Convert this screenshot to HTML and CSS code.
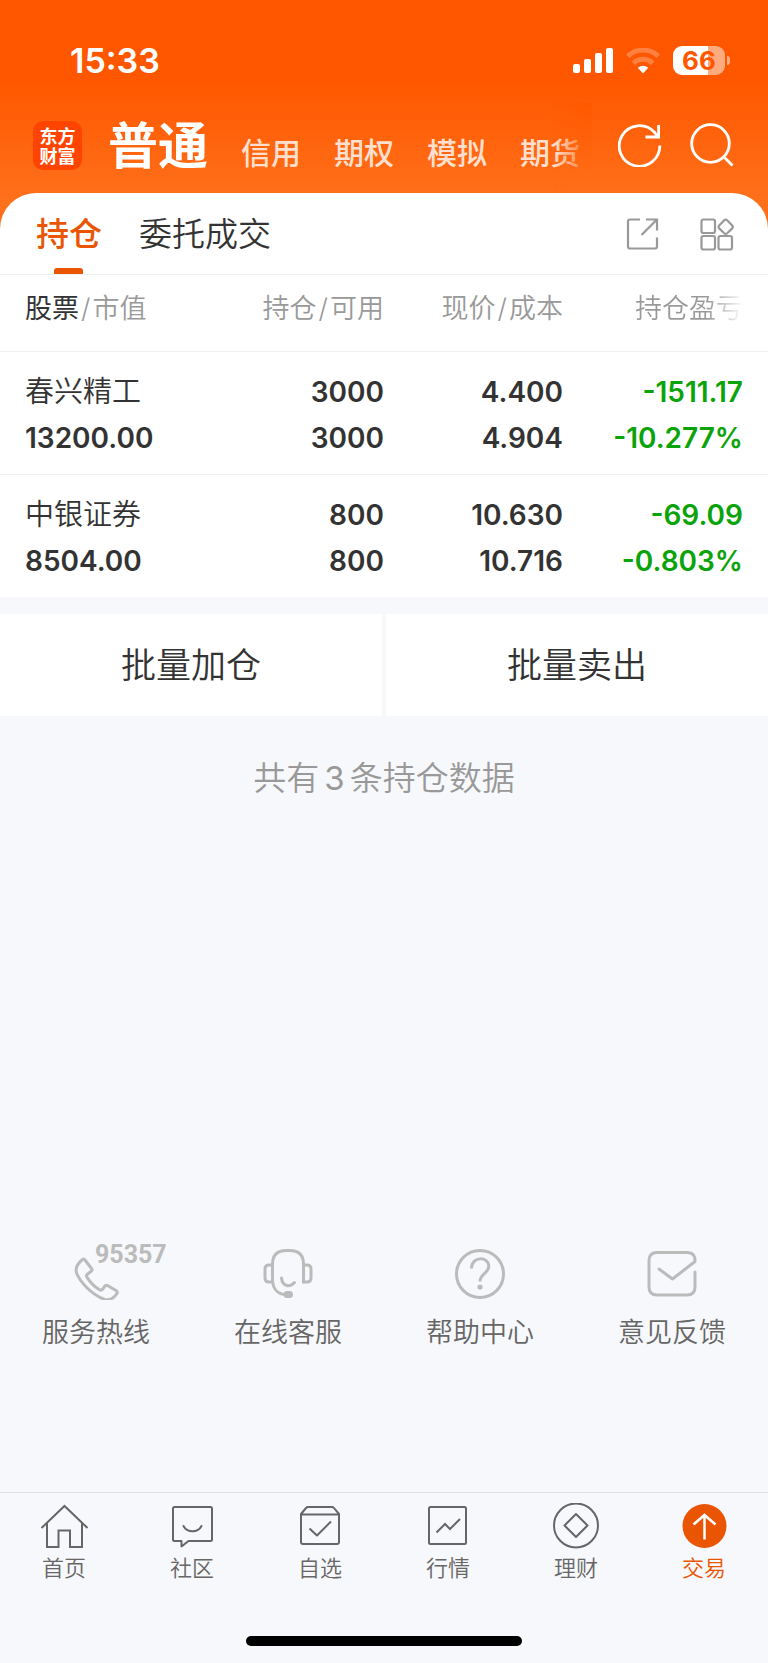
FILE: index.html
```html
<!DOCTYPE html>
<html lang="zh-CN">
<head>
<meta charset="utf-8">
<meta name="viewport" content="width=device-width, initial-scale=1">
<title>普通交易 - 持仓</title>
<link rel="stylesheet" href="styles.css">
</head>
<body>
<div class="app">
  <header class="top">
    <div class="status">
      <span class="clock">15:33</span>
      <div class="status-icons">
        <svg class="signal" width="40" height="26" viewBox="0 0 40 26" fill="#fff" aria-hidden="true">
          <rect x="0" y="16" width="7" height="9" rx="2"/><rect x="11" y="11" width="7" height="14" rx="2"/><rect x="22" y="5" width="7" height="20" rx="2"/><rect x="33" y="0" width="7" height="25" rx="2"/>
        </svg>
        <svg class="wifi" width="34" height="26" viewBox="0 0 34 26" fill="none" aria-hidden="true">
          <path d="M1.800 8.200A22 22 0 0 1 32.200 8.200" stroke="#fff" stroke-opacity=".25" stroke-width="5"/>
          <path d="M7.300 15.200A14 14 0 0 1 26.700 15.200" stroke="#fff" stroke-opacity=".25" stroke-width="5"/>
          <path d="M17 25.500L11.800 19.800Q17 15.800 22.200 19.800Z" fill="#fff"/>
        </svg>
        <div class="battery"><span class="battery-body">66</span><span class="battery-nub"></span></div>
      </div>
    </div>
    <div class="account">
      <div class="logo">东方<br>财富</div>
      <nav class="accounts">
        <a class="current" href="#">普通</a><a href="#">信用</a><a href="#">期权</a><a href="#">模拟</a><a href="#">期货</a>
      </nav>
      <button class="tool" aria-label="刷新">
        <svg width="44" height="44" viewBox="0 0 44 44" fill="none" stroke="#fff" stroke-width="2.800" aria-hidden="true">
          <path d="M41.800 22.500A20.300 20.300 0 1 1 36.500 9.300L40 13.800"/><path d="M40.600 2V14H27.500"/>
        </svg>
      </button>
      <button class="tool" aria-label="搜索">
        <svg width="44" height="44" viewBox="0 0 44 44" fill="none" stroke="#fff" stroke-width="2.800" aria-hidden="true">
          <circle cx="20.500" cy="20.500" r="18.800"/><path d="M33.500 33.500L42.500 42.500"/>
        </svg>
      </button>
    </div>
  </header>

  <main class="sheet">
    <div class="tabs">
      <button class="tab active">持仓</button>
      <button class="tab">委托成交</button>
      <button class="tool push" aria-label="分享">
        <svg width="34" height="34" viewBox="0 0 34 34" fill="none" stroke="#999" stroke-width="2.200" aria-hidden="true">
          <path d="M14 2.500H4Q2 2.500 2 4.500V29.500Q2 31.500 4 31.500H29Q31 31.500 31 29.500V20.500"/><path d="M20 2.500H31V13.500M31 2.500L15.500 18"/>
        </svg>
      </button>
      <button class="tool" aria-label="更多功能">
        <svg width="34" height="34" viewBox="0 0 34 34" fill="none" stroke="#999" stroke-width="2.200" aria-hidden="true">
          <rect x="1.500" y="2.500" width="13.500" height="13.500" rx="2"/><rect x="1.500" y="19" width="13.500" height="13.500" rx="2"/><rect x="18.500" y="19" width="13.500" height="13.500" rx="2"/>
          <path d="M24.200 3.300Q25.700 1.900 27.200 3.300L32.200 8.400Q33.400 9.900 32.200 11.400L27.200 16.300Q25.700 17.700 24.200 16.300L19.200 11.400Q18 9.900 19.200 8.400Z"/>
        </svg>
      </button>
    </div>

    <table class="holdings">
      <thead>
        <tr><th scope="col"><b>股票</b><i>/</i>市值</th><th scope="col">持仓<i>/</i>可用</th><th scope="col">现价<i>/</i>成本</th><th scope="col" class="clipped">持仓盈亏</th></tr>
      </thead>
      <tbody>
        <tr><td><span class="name">春兴精工</span>13200.00</td><td>3000<br>3000</td><td>4.400<br>4.904</td><td class="loss">-1511.17<br>-10.277%</td></tr>
        <tr><td><span class="name">中银证券</span>8504.00</td><td>800<br>800</td><td>10.630<br>10.716</td><td class="loss">-69.09<br>-0.803%</td></tr>
      </tbody>
    </table>

    <div class="batch">
      <button>批量加仓</button>
      <button>批量卖出</button>
    </div>
    <p class="count">共有<span>3</span>条持仓数据</p>
  </main>

  <section class="services">
    <a href="#" class="hotline">
      <span class="service-icon">
        <svg width="52" height="52" viewBox="0 0 52 52" fill="none" stroke="#bbb" stroke-width="3" stroke-linejoin="round" aria-hidden="true">
          <path d="M15 12L21.800 21Q22.500 22 21.500 23L17 26.500Q16 27.500 16.700 28.700Q22 37.500 30 42Q31.500 42.500 32.500 41.300L35 38Q36 36.700 37.500 37.500L46 42.500Q48 44 47 45.500Q42 53 34.500 51.500C21 46 10.500 34.500 6.500 25Q4.500 18 12.500 11.500Q14 10.500 15 12Z"/>
        </svg>
        <span class="number">95357</span>
      </span>
      服务热线
    </a>
    <a href="#">
      <span class="service-icon">
        <svg width="52" height="52" viewBox="0 0 52 52" fill="none" stroke="#bbb" stroke-width="3" stroke-linecap="round" stroke-linejoin="round" aria-hidden="true">
          <path d="M41.500 34V16Q41.500 2.500 27.500 2.500H24.500Q10.500 2.500 10.500 16V31C10.500 40 15 46 23 46.500"/>
          <path d="M10.500 17H7Q3 17 3 21V30Q3 34 7 34H10.500M41.500 17H45Q49 17 49 21V30Q49 34 45 34H41.500"/>
          <path d="M19.500 30C20.500 39.500 28.500 39 32.500 34.500"/><rect x="23" y="44.500" width="6.500" height="4" rx="2" fill="#bbb"/>
        </svg>
      </span>
      在线客服
    </a>
    <a href="#">
      <span class="service-icon">
        <svg width="52" height="52" viewBox="0 0 52 52" fill="none" stroke="#bbb" stroke-width="3" aria-hidden="true">
          <circle cx="26" cy="26" r="23.500"/><path d="M17.500 20.500C17.500 8 34.800 8 34.800 18.500C34.800 25 26 26 26 33.500"/><circle cx="26" cy="39" r="2.600" fill="#bbb" stroke="none"/>
        </svg>
      </span>
      帮助中心
    </a>
    <a href="#">
      <span class="service-icon">
        <svg width="52" height="52" viewBox="0 0 52 52" fill="none" stroke="#bbb" stroke-width="3" stroke-linecap="round" stroke-linejoin="round" aria-hidden="true">
          <path d="M49 24V39Q49 47 41 47H11Q3 47 3 39V12.500Q3 4.500 11 4.500H41Q49.500 4.500 49 13.500L26.500 31L13 21"/>
        </svg>
      </span>
      意见反馈
    </a>
  </section>

  <footer class="bottom">
    <nav class="dock">
      <a href="#">
        <svg width="48" height="48" viewBox="0 0 48 48" fill="none" stroke="#666" stroke-width="2" aria-hidden="true"><path d="M1.500 25L24.500 3L47.500 25M7 20V44H18.500V27.500H30V44H42V20"/></svg>
        首页
      </a>
      <a href="#">
        <svg width="48" height="48" viewBox="0 0 48 48" fill="none" stroke="#666" stroke-width="2" stroke-linejoin="round" aria-hidden="true"><path d="M6.500 4H42.500Q44 4 44 5.500V36.500Q44 38 42.500 38H20.500L13.500 43.500V38H6.500Q5 38 5 36.500V5.500Q5 4 6.500 4Z"/><path d="M15.500 23C19 30 30 30 33.500 23" stroke-linecap="round"/></svg>
        社区
      </a>
      <a href="#">
        <svg width="48" height="48" viewBox="0 0 48 48" fill="none" stroke="#666" stroke-width="2" stroke-linejoin="round" aria-hidden="true"><path d="M5 11L10 5Q10.800 4 12 4H36Q37.200 4 38 5L43 11V39Q43 41 41 41H7Q5 41 5 39ZM5 11.500H43"/><path d="M13.500 25.500L21 32.500L35 18.500"/></svg>
        自选
      </a>
      <a href="#">
        <svg width="48" height="48" viewBox="0 0 48 48" fill="none" stroke="#666" stroke-width="2" aria-hidden="true"><rect x="5" y="4" width="37" height="37" rx="1.500"/><path d="M12.500 29.500L21 21L26 26L36 16"/></svg>
        行情
      </a>
      <a href="#">
        <svg width="48" height="48" viewBox="0 0 48 48" fill="none" stroke="#666" stroke-width="2" stroke-linejoin="round" aria-hidden="true"><circle cx="24" cy="22.500" r="22"/><path d="M24 11L35.500 22.500L24 34L12.500 22.500Z"/></svg>
        理财
      </a>
      <a href="#" class="active">
        <svg width="48" height="48" viewBox="0 0 48 48" fill="none" stroke="#fff" stroke-width="2.500" aria-hidden="true"><circle cx="24.500" cy="23" r="22" fill="#ea5504" stroke="none"/><path d="M24.500 36.500V12M13.500 21.500L24.500 12L35.500 21.500"/></svg>
        交易
      </a>
    </nav>
    <div class="home-bar"></div>
  </footer>
</div>
</body>
</html>
```
FILE: styles.css
```css
* { box-sizing: border-box; }

body {
  margin: 0;
  background: #f7f8fa;
  color: #333;
  font-family: Inter, "Noto Sans CJK SC", sans-serif;
}

a { color: inherit; text-decoration: none; }

button {
  padding: 0;
  border: 0;
  background: none;
  color: inherit;
  font: inherit;
}

svg { display: block; }

.app {
  display: flex;
  flex-direction: column;
  min-height: 100vh;
  background: linear-gradient(#ff5700 80px, #ff701a 200px, #ff701a 240px, #f7f8fb 240px);
}

.top { color: #fff; }

.status {
  display: flex;
  align-items: center;
  justify-content: space-between;
  height: 103px;
  padding: 18px 38px 0 70px;
}

.clock { font-size: 34px; font-weight: 600; line-height: 40px; }

.status-icons { display: flex; align-items: center; gap: 13px; }

.battery { display: flex; align-items: center; gap: 2px; }

.battery-body {
  width: 52px;
  border-radius: 9px;
  background: linear-gradient(90deg, #fff 67%, #ffab80 67%);
  color: #ff5700;
  font-size: 26px;
  font-weight: 700;
  line-height: 29px;
  text-align: center;
}

.battery-nub { width: 3px; height: 9px; border-radius: 0 4px 4px 0; background: #ffab80; }

.account {
  display: flex;
  align-items: center;
  height: 90px;
  padding: 0 34px 0 33px;
}

.logo {
  width: 49px;
  height: 49px;
  margin-top: -5px;
  padding-top: 4px;
  border-radius: 10px;
  background: #ff4400;
  font-family: "Noto Sans CJK SC", sans-serif;
  font-size: 18px;
  font-weight: 700;
  line-height: 20px;
  text-align: center;
}

.accounts {
  position: relative;
  display: flex;
  flex: 1;
  align-items: baseline;
  gap: 33px;
  height: 90px;
  margin-right: 26px;
  padding-left: 26px;
  overflow: hidden;
  font-size: 30px;
  font-weight: 500;
  line-height: 86px;
  white-space: nowrap;
}

.accounts a { color: #ffe0d0; }

.accounts .current { color: #fff; font-size: 50px; font-weight: 700; }

.accounts::after {
  content: "";
  position: absolute;
  top: 0;
  right: 0;
  width: 38px;
  height: 90px;
  background: linear-gradient(#ff5700, #ff701a);
  mask-image: linear-gradient(90deg, transparent, #000);
}

.account .tool { margin-top: -6px; }
.account .tool + .tool { margin-left: 28px; }

.sheet {
  border-radius: 36px 36px 0 0;
  background: #fff;
}

.tabs {
  display: flex;
  align-items: center;
  height: 82px;
  padding: 0 34px 0 36px;
  border-bottom: 1px solid #f0f1f3;
}

.tab {
  position: relative;
  height: 81px;
  margin-right: 37px;
  padding-bottom: 4px;
  font-size: 33px;
  font-weight: 350;
}

.tab.active { color: #ea5504; font-weight: 500; }

.tab.active::after {
  content: "";
  position: absolute;
  bottom: 0;
  left: 18px;
  width: 29px;
  height: 6px;
  border-radius: 3px 3px 0 0;
  background: #ea5504;
}

.push { margin-left: auto; }
.tabs .tool + .tool { margin-left: 40px; }

.holdings {
  width: 100%;
  border-collapse: collapse;
  table-layout: fixed;
  font-size: 28px;
  font-weight: 600;
  line-height: 46px;
}

.holdings th {
  height: 76px;
  padding: 0 0 8px;
  color: #999;
  font-size: 27px;
  font-weight: 350;
  text-align: right;
}

.holdings b { color: #333; font-weight: 400; }
.holdings i { padding: 0 2px; font-style: normal; }

.holdings td { padding: 17px 0 13px; text-align: right; }

.holdings tr > :first-child { width: 27%; padding-left: 25px; text-align: left; }
.holdings tr > :nth-child(2) { width: 23%; }
.holdings tr > :last-child { width: 205px; padding-right: 25px; }

.holdings tbody tr { border-top: 1px solid #eff0f2; }

.name { display: block; font-size: 29px; font-weight: 350; }

.loss { color: #0aa30a; }

.holdings .clipped {
  background: linear-gradient(90deg, #999 70%, #fff 88%) text;
  color: transparent;
}

.batch {
  display: flex;
  gap: 4px;
  padding-top: 17px;
  background: #f7f8fb;
}

.batch button {
  flex: 1;
  background: #fff;
  font-size: 35px;
  font-weight: 350;
  line-height: 102px;
}

.count {
  margin: 0;
  padding-top: 38px;
  background: #f7f8fb;
  color: #999;
  font-size: 33px;
  font-weight: 350;
  line-height: 48px;
  text-align: center;
}

.count span { padding: 0 5px; font-weight: 400; }

.services {
  display: flex;
  margin-top: auto;
  padding-bottom: 139px;
}

.services a {
  display: flex;
  flex: 1;
  flex-direction: column;
  align-items: center;
  gap: 13px;
  color: #666;
  font-size: 27px;
  font-weight: 350;
  line-height: 40px;
}

.service-icon { position: relative; }

.number {
  position: absolute;
  top: -13px;
  left: 25px;
  color: #bbb;
  font-family: Roboto, sans-serif;
  font-size: 25px;
  font-weight: 700;
}

.bottom { border-top: 1px solid #dfe0e3; background: #f7f8fb; }

.dock { display: flex; padding-top: 10px; }

.dock a {
  display: flex;
  flex: 1;
  flex-direction: column;
  align-items: center;
  gap: 2px;
  color: #666;
  font-size: 22px;
  font-weight: 350;
  line-height: 30px;
}

.dock .active { color: #ea5504; }

.home-bar {
  width: 36%;
  height: 10px;
  margin: 53px auto 17px;
  border-radius: 5px;
  background: #000;
}
```
